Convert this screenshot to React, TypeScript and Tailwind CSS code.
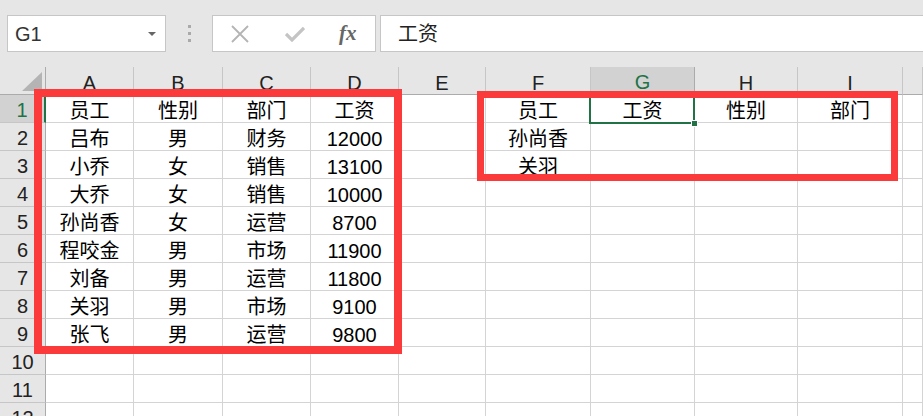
import React from "react";

const cols = ["A", "B", "C", "D", "E", "F", "G", "H", "I", ""];

// rows of data, indexed by column letter
const data: Record<string, string[]> = {
  A: ["员工", "吕布", "小乔", "大乔", "孙尚香", "程咬金", "刘备", "关羽", "张飞"],
  B: ["性别", "男", "女", "女", "女", "男", "男", "男", "男"],
  C: ["部门", "财务", "销售", "销售", "运营", "市场", "运营", "市场", "运营"],
  D: ["工资", "12000", "13100", "10000", "8700", "11900", "11800", "9100", "9800"],
  F: ["员工", "孙尚香", "关羽"],
  G: ["工资"],
  H: ["性别"],
  I: ["部门"],
};

const font = { fontFamily: '"Liberation Sans", "Noto Sans CJK SC", sans-serif' };

function Toolbar() {
  return (
    <div className="h-[67px] bg-[#e6e6e6] flex items-start pt-[15px] pl-[7px]">
      <div className="w-[159px] h-[37px] bg-white border border-[#c6c6c6] flex items-center">
        <span className="ml-[7px] text-[20px] text-[#333] leading-none">G1</span>
        <span className="ml-auto mr-[9px] w-0 h-0 border-l-[4px] border-r-[4px] border-t-[4px] border-l-transparent border-r-transparent border-t-[#666]" />
      </div>
      <div className="w-[46px] h-[37px] flex flex-col items-center justify-center gap-[4px]">
        <span className="w-[3px] h-[3px] bg-[#aaa]" />
        <span className="w-[3px] h-[3px] bg-[#aaa]" />
        <span className="w-[3px] h-[3px] bg-[#aaa]" />
      </div>
      <div className="w-[164px] h-[37px] bg-white border border-[#c6c6c6] flex items-center pl-[17px]">
        <svg width="20" height="18" viewBox="0 0 20 18">
          <path d="M2 1 L18 17 M18 1 L2 17" stroke="#b4b4b4" strokeWidth="1.8" fill="none" />
        </svg>
        <svg className="ml-[35px]" width="20" height="16" viewBox="0 0 20 16">
          <path d="M1 8 L7 14 L19 2" stroke="#c4c4c4" strokeWidth="3.2" fill="none" />
        </svg>
        <span
          className="ml-[34px] text-[21px] italic font-bold text-[#666] leading-none"
          style={{ fontFamily: '"Liberation Serif", serif' }}
        >
          fx
        </span>
      </div>
      <div className="flex-1 ml-[4px] -mr-[2px] h-[37px] bg-white border border-[#c6c6c6] flex items-center">
        <span className="ml-[17px] text-[20px] text-[#222]">工资</span>
      </div>
    </div>
  );
}

export default function App() {
  const rows = Array.from({ length: 12 }, (_, i) => i + 1);
  return (
    <div className="w-[923px] h-[416px] overflow-hidden bg-white relative text-black" style={font}>
      <Toolbar />
      <div className="grid grid-cols-[46px_88px_89px_88px_88px_87px_105px_104px_103px_105px_1fr] auto-rows-[28px]">
        {/* header row */}
        <div className="bg-[#e6e6e6] border-r border-b border-[#ababab] flex items-end justify-end pr-[3px] pb-[3px]">
          <svg width="20" height="19" viewBox="0 0 20 19">
            <polygon points="20,0 20,19 0,19" fill="#b4b4b4" />
          </svg>
        </div>
        {cols.map((c, i) => (
          <div
            key={i}
            className={
              c === "G"
                ? "bg-[#d2d2d2] border-r border-r-[#ababab] border-b-2 border-b-[#217346] flex items-center justify-center text-[20px] text-[#217346] pt-[4px]"
                : "bg-[#e6e6e6] border-r border-r-[#c6c6c6] border-b border-b-[#ababab] flex items-center justify-center text-[20px] text-[#222] pt-[4px]"
            }
          >
            {c}
          </div>
        ))}
        {rows.map((r) => (
          <React.Fragment key={r}>
            <div
              className={
                r === 1
                  ? "bg-[#d2d2d2] border-r-2 border-r-[#217346] border-b border-b-[#c6c6c6] flex items-center justify-center text-[20px] text-[#217346] pt-[2px]"
                  : "bg-[#e6e6e6] border-r border-r-[#ababab] border-b border-b-[#c6c6c6] flex items-center justify-center text-[20px] text-[#222] pt-[2px]"
              }
            >
              {r}
            </div>
            {cols.map((c, i) => (
              <div
                key={i}
                className="border-r border-b border-[#d4d4d4] flex items-end justify-center text-[20px] leading-[21px] whitespace-nowrap overflow-hidden"
              >
                {data[c]?.[r - 1] ?? ""}
              </div>
            ))}
          </React.Fragment>
        ))}
      </div>

      {/* selected cell G1 */}
      <div className="absolute left-[589px] top-[93px] w-[106px] h-[31px] border-2 border-[#217346] pointer-events-none">
        <span className="absolute right-[-5px] bottom-[-5px] w-[7px] h-[7px] bg-[#217346] border border-white" />
      </div>

      {/* red annotation boxes */}
      <div className="absolute left-[34px] top-[89px] w-[368px] h-[265px] border-[8px] border-[#fb3b3b] pointer-events-none" />
      <div className="absolute left-[477px] top-[91px] w-[421px] h-[90px] border-[7px] border-[#fb3b3b] pointer-events-none" />
    </div>
  );
}
